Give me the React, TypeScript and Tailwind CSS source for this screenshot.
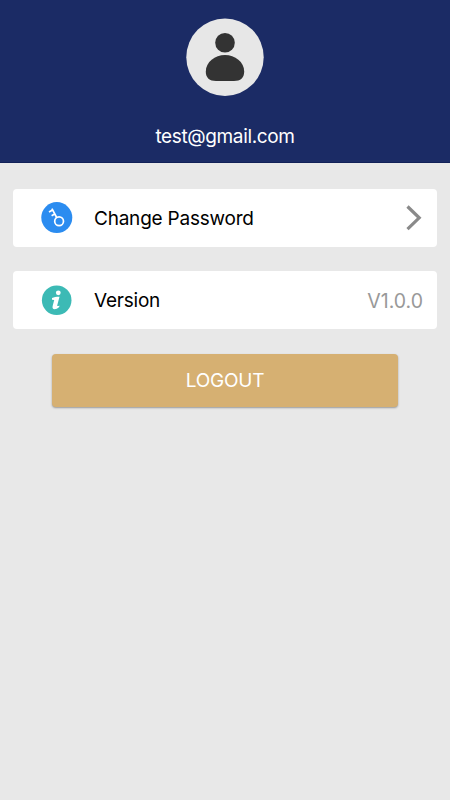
import React from 'react';

function AvatarIcon() {
  return (
    <svg viewBox="0 0 78 78" className="h-[78px] w-[78px]" aria-hidden="true">
      <circle cx="39" cy="39.2" r="38.7" fill="#e7e7e7" />
      <circle cx="39" cy="24.8" r="9.8" fill="#333333" />
      <path
        d="M39 37 C49 37 58.2 44 58.2 53.5 C58.2 60 54.5 63 48 63 H30 C23.5 63 19.8 60 19.8 53.5 C19.8 44 29 37 39 37 Z"
        fill="#333333"
      />
    </svg>
  );
}

function KeyIcon() {
  return (
    <svg viewBox="0 0 32 32" className="h-8 w-8" aria-hidden="true">
      <circle cx="15.8" cy="15.6" r="15.5" fill="#2b8cf0" />
      <g fill="none" stroke="#ffffff" strokeWidth="1.7">
        <circle cx="18.1" cy="19.2" r="4.4" />
        <path d="M15.7 15.5 L10.9 6.7 M11.6 8.1 L8 10.1 M13.7 12 L10.6 13.8" />
      </g>
    </svg>
  );
}

function InfoIcon() {
  return (
    <svg viewBox="0 0 32 32" className="h-8 w-8" aria-hidden="true">
      <circle cx="15.7" cy="16.2" r="14.8" fill="#3cbab5" />
      <circle cx="17.3" cy="8.8" r="2.4" fill="#ffffff" />
      <path
        d="M11 14 C13 13 15 12.7 18.5 12.7 L16.3 20.9 C16 22.3 16.8 22.4 18.5 21.4 L18.2 23 C16.5 24.6 15 25.2 13.6 25.2 C11.8 25.2 11.1 24 11.7 21.7 L13.2 16 L11 15.8 Z"
        fill="#ffffff"
      />
    </svg>
  );
}

function ChevronIcon() {
  return (
    <svg viewBox="0 0 18 26" className="h-[26px] w-[18px]" aria-hidden="true">
      <path d="M1.5 1.5 L13.2 12.8 L1.5 24.1" fill="none" stroke="#8a8a8a" strokeWidth="3.2" />
    </svg>
  );
}

interface SettingRowProps {
  icon: React.ReactNode;
  label: string;
  children: React.ReactNode;
}

function SettingRow({ icon, label, children }: SettingRowProps) {
  return (
    <div className="flex h-[57.5px] items-center rounded bg-white pr-[13px] pl-7">
      {icon}
      <span className="ml-[21px] flex-1 pt-[3px] text-[19px] tracking-[-0.22px] text-black">{label}</span>
      {children}
    </div>
  );
}

export default function App() {
  return (
    <div className="min-h-screen bg-[#e8e8e8] font-['Inter',sans-serif] text-[19px] leading-6">
      {/* Profile header */}
      <header className="flex h-[163px] flex-col items-center border-b border-[#112057] bg-[#1b2b65] pt-[18px]">
        <AvatarIcon />
        <p className="mt-[29px] tracking-[-0.36px] text-white">test@gmail.com</p>
      </header>

      <main className="px-[13px] pt-[26px]">
        <div className="space-y-[24.5px]">
          <SettingRow icon={<KeyIcon />} label="Change Password">
            <ChevronIcon />
          </SettingRow>
          <SettingRow icon={<InfoIcon />} label="Version">
            <span className="mr-px pt-[2px] text-[19.5px] text-[#999999]">V1.0.0</span>
          </SettingRow>
        </div>

        <button className="mx-auto mt-[25px] block h-[53.5px] w-[346px] rounded bg-[#d6b072] pt-[2px] tracking-[-0.25px] text-white shadow-[0_1px_2px_rgba(0,0,0,0.35)]">
          LOGOUT
        </button>
      </main>
    </div>
  );
}
